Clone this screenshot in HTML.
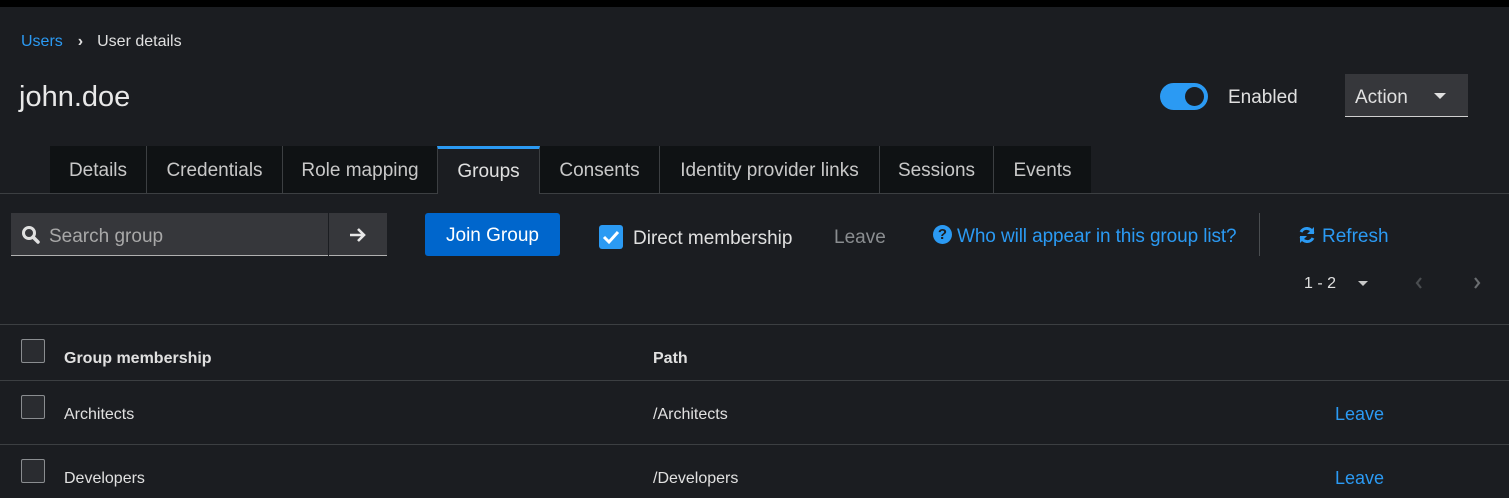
<!DOCTYPE html>
<html><head><style>
*{box-sizing:border-box;margin:0;padding:0}
body{width:1509px;height:498px;background:#1b1d21;font-family:"Liberation Sans",sans-serif;color:#e0e0e0;position:relative;overflow:hidden}
.a{position:absolute}
.top{left:0;top:0;width:1509px;height:7px;background:#000}
.tab{position:absolute;top:146px;height:47px;background:#0f1214;border-right:1px solid #3c3f42;font-size:19px;color:#c8c8c8;line-height:50px;text-align:center}
.tab.act{background:#1b1d21;border-top:3px solid #2b9af3;line-height:46px;color:#e0e0e0;border-left:1px solid #3c3f42}
.cb{position:absolute;width:24px;height:24px;border:1px solid #8a8d90;border-radius:2px;background:#2a2c30}
.hl{position:absolute;left:0;width:1509px;height:1px;background:#3c3f42}
</style></head><body>
<div class="a top"></div>
<div class="a" style="left:21px;top:33px;font-size:16px"><span style="color:#2b9af3">Users</span><span style="margin:0 14px 0 15px;font-weight:bold">›</span>User details</div>
<div class="a" style="left:19px;top:81px;font-size:29px;color:#e8e8e8">john.doe</div>
<div class="a" style="left:1160px;top:83px;width:48px;height:27px;border-radius:14px;background:#2b9af3"></div>
<div class="a" style="left:1185px;top:87px;width:19px;height:19px;border-radius:50%;background:#1b1d21"></div>
<div class="a" style="left:1228px;top:87px;font-size:19px">Enabled</div>
<div class="a" style="left:1345px;top:74px;width:123px;height:43px;background:#36373b;border-bottom:1px solid #d0d0d0"></div>
<div class="a" style="left:1355px;top:87px;font-size:19px">Action</div>
<div class="a" style="left:1434px;top:93px;border-left:6px solid transparent;border-right:6px solid transparent;border-top:6px solid #e0e0e0"></div>
<div class="hl" style="top:193px"></div>
<div class="tab" style="left:50px;width:97px">Details</div>
<div class="tab" style="left:147px;width:136px">Credentials</div>
<div class="tab" style="left:283px;width:155px">Role mapping</div>
<div class="tab act" style="left:437px;width:103px;height:48px">Groups</div>
<div class="tab" style="left:540px;width:120px">Consents</div>
<div class="tab" style="left:660px;width:220px">Identity provider links</div>
<div class="tab" style="left:880px;width:114px">Sessions</div>
<div class="tab" style="left:994px;width:97px;border-right:none">Events</div>
<div class="a" style="left:11px;top:213px;width:317px;height:43px;background:#36373b;border-bottom:1px solid #b0b0b0"></div>
<svg class="a" style="left:21px;top:225px" width="20" height="20" viewBox="0 0 20 20"><circle cx="8" cy="8" r="5.5" fill="none" stroke="#e0e0e0" stroke-width="3"/><path d="M12 12l5 5" stroke="#e0e0e0" stroke-width="3.5" stroke-linecap="round"/></svg>
<div class="a" style="left:49px;top:226px;font-size:19px;color:#a8a8a8">Search group</div>
<div class="a" style="left:329px;top:213px;width:58px;height:43px;background:#36373b;border-bottom:1px solid #b0b0b0"></div>
<svg class="a" style="left:348px;top:225px" width="20" height="20" viewBox="0 0 20 20"><path d="M2 10h14M10 4l6 6-6 6" fill="none" stroke="#e8e8e8" stroke-width="2.6"/></svg>
<div class="a" style="left:425px;top:213px;width:135px;height:43px;background:#0066cc;border-radius:3px;font-size:19px;color:#fff;text-align:center;line-height:45px">Join Group</div>
<div class="a" style="left:599px;top:225px;width:24px;height:24px;background:#2b9af3;border-radius:3px"></div>
<svg class="a" style="left:599px;top:225px" width="24" height="24" viewBox="0 0 24 24"><path d="M5 12l5 5 9-10" fill="none" stroke="#fff" stroke-width="3"/></svg>
<div class="a" style="left:633px;top:228px;font-size:19px">Direct membership</div>
<div class="a" style="left:834px;top:227px;font-size:19px;color:#8a8d90">Leave</div>
<div class="a" style="left:933px;top:225px;width:19px;height:19px;border-radius:50%;background:#2b9af3;color:#1b1d21;font-size:15px;font-weight:bold;text-align:center;line-height:19px">?</div>
<div class="a" style="left:957px;top:226px;font-size:19px;color:#2b9af3;letter-spacing:-0.1px">Who will appear in this group list?</div>
<div class="a" style="left:1259px;top:213px;width:1px;height:43px;background:#4a4d50"></div>
<svg class="a" style="left:1297px;top:225px" width="20" height="20" viewBox="0 0 20 20"><path d="M16 8A6.5 6.5 0 0 0 4 7M4 12a6.5 6.5 0 0 0 12 1" fill="none" stroke="#2b9af3" stroke-width="3"/><path d="M17 2v7h-7zM3 18v-7h7z" fill="#2b9af3"/></svg>
<div class="a" style="left:1322px;top:226px;font-size:19px;color:#2b9af3">Refresh</div>
<div class="a" style="left:1304px;top:275px;font-size:16px">1 - 2</div>
<div class="a" style="left:1358px;top:281px;border-left:5px solid transparent;border-right:5px solid transparent;border-top:5px solid #c8c8c8"></div>
<svg class="a" style="left:1414px;top:276px" width="10" height="14" viewBox="0 0 10 14"><path d="M7 2L3 7l4 5" fill="none" stroke="#4a4d50" stroke-width="2.2"/></svg>
<svg class="a" style="left:1472px;top:276px" width="10" height="14" viewBox="0 0 10 14"><path d="M3 2l4 5-4 5" fill="none" stroke="#6a6d70" stroke-width="2.2"/></svg>
<div class="hl" style="top:324px"></div>
<div class="cb" style="left:21px;top:339px"></div>
<div class="a" style="left:64px;top:350px;font-size:16px;font-weight:bold">Group membership</div>
<div class="a" style="left:653px;top:350px;font-size:16px;font-weight:bold">Path</div>
<div class="hl" style="top:380px"></div>
<div class="cb" style="left:21px;top:395px"></div>
<div class="a" style="left:64px;top:406px;font-size:16px">Architects</div>
<div class="a" style="left:653px;top:406px;font-size:16px">/Architects</div>
<div class="a" style="left:1335px;top:404px;font-size:18px;color:#2b9af3">Leave</div>
<div class="hl" style="top:444px"></div>
<div class="cb" style="left:21px;top:459px"></div>
<div class="a" style="left:64px;top:470px;font-size:16px">Developers</div>
<div class="a" style="left:653px;top:470px;font-size:16px">/Developers</div>
<div class="a" style="left:1335px;top:468px;font-size:18px;color:#2b9af3">Leave</div>
</body></html>
